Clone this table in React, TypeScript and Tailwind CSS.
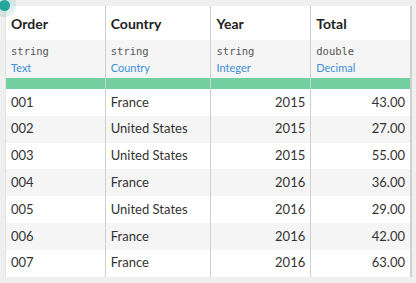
import React from "react";

const columns = [
  { name: "Order", storage: "string", meaning: "Text", right: false },
  { name: "Country", storage: "string", meaning: "Country", right: false },
  { name: "Year", storage: "string", meaning: "Integer", right: true },
  { name: "Total", storage: "double", meaning: "Decimal", right: true },
];

const rows = [
  ["001", "France", "2015", "43.00"],
  ["002", "United States", "2015", "27.00"],
  ["003", "United States", "2015", "55.00"],
  ["004", "France", "2016", "36.00"],
  ["005", "United States", "2016", "29.00"],
  ["006", "France", "2016", "42.00"],
  ["007", "France", "2016", "63.00"],
];

const widths = ["w-[99px]", "w-[106px]", "w-[100px]", "w-[100px]"];

export default function App() {
  return (
    <div className="relative h-[283px] w-[416px] overflow-hidden bg-[#efefef] pl-[5px] pt-[6px] font-['Lato',sans-serif]">
      <div className="w-[407px] border-l border-r-2 border-l-[#e4e4e4] border-r-[#cfcfcf] bg-white">
        {/* header */}
        <div className="flex h-[34px]">
          {columns.map((c, i) => (
            <div
              key={c.name}
              className={`${widths[i]} flex items-center px-[5px] text-[14px] font-bold text-[#222] ${i > 0 ? "border-l border-[#cfcfcf]" : ""}`}
            >
              {c.name}
            </div>
          ))}
        </div>
        {/* types */}
        <div className="flex h-[38px] bg-[#f5f5f5]">
          {columns.map((c, i) => (
            <div
              key={c.name}
              className={`${widths[i]} flex flex-col px-[5px] pt-[3px] ${i > 0 ? "border-l border-[#cfcfcf]" : ""}`}
            >
              <span className="font-['DejaVu_Sans_Mono',monospace] text-[10.5px] leading-[16px] text-[#555]">{c.storage}</span>
              <span className="text-[11px] leading-[18px] text-[#3d8fd6]">{c.meaning}</span>
            </div>
          ))}
        </div>
        {/* quality bar */}
        <div className="flex h-[11px] bg-[#73cf9f]">
          {columns.map((c, i) => (
            <div key={c.name} className={`${widths[i]} ${i > 0 ? "border-l border-[#cfcfcf]" : ""}`} />
          ))}
        </div>
        {rows.map((r, ri) => (
          <div key={ri} className={`flex h-[26.8px] ${ri % 2 === 1 ? "bg-[#f5f5f5]" : "bg-white"}`}>
            {r.map((v, i) => (
              <div
                key={i}
                className={`${widths[i]} flex items-center px-[5px] text-[13px] text-[#333] ${columns[i].right ? "justify-end" : ""} ${i > 0 ? "border-l border-[#cfcfcf]" : ""}`}
              >
                {v}
              </div>
            ))}
          </div>
        ))}
      </div>
      <div className="absolute left-[-8px] top-[-7px] flex h-[24px] w-[24px] items-center justify-center rounded-full bg-[#26a69a]/15">
        <div className="h-[11px] w-[11px] rounded-full bg-[#26a69a]" />
      </div>
    </div>
  );
}
